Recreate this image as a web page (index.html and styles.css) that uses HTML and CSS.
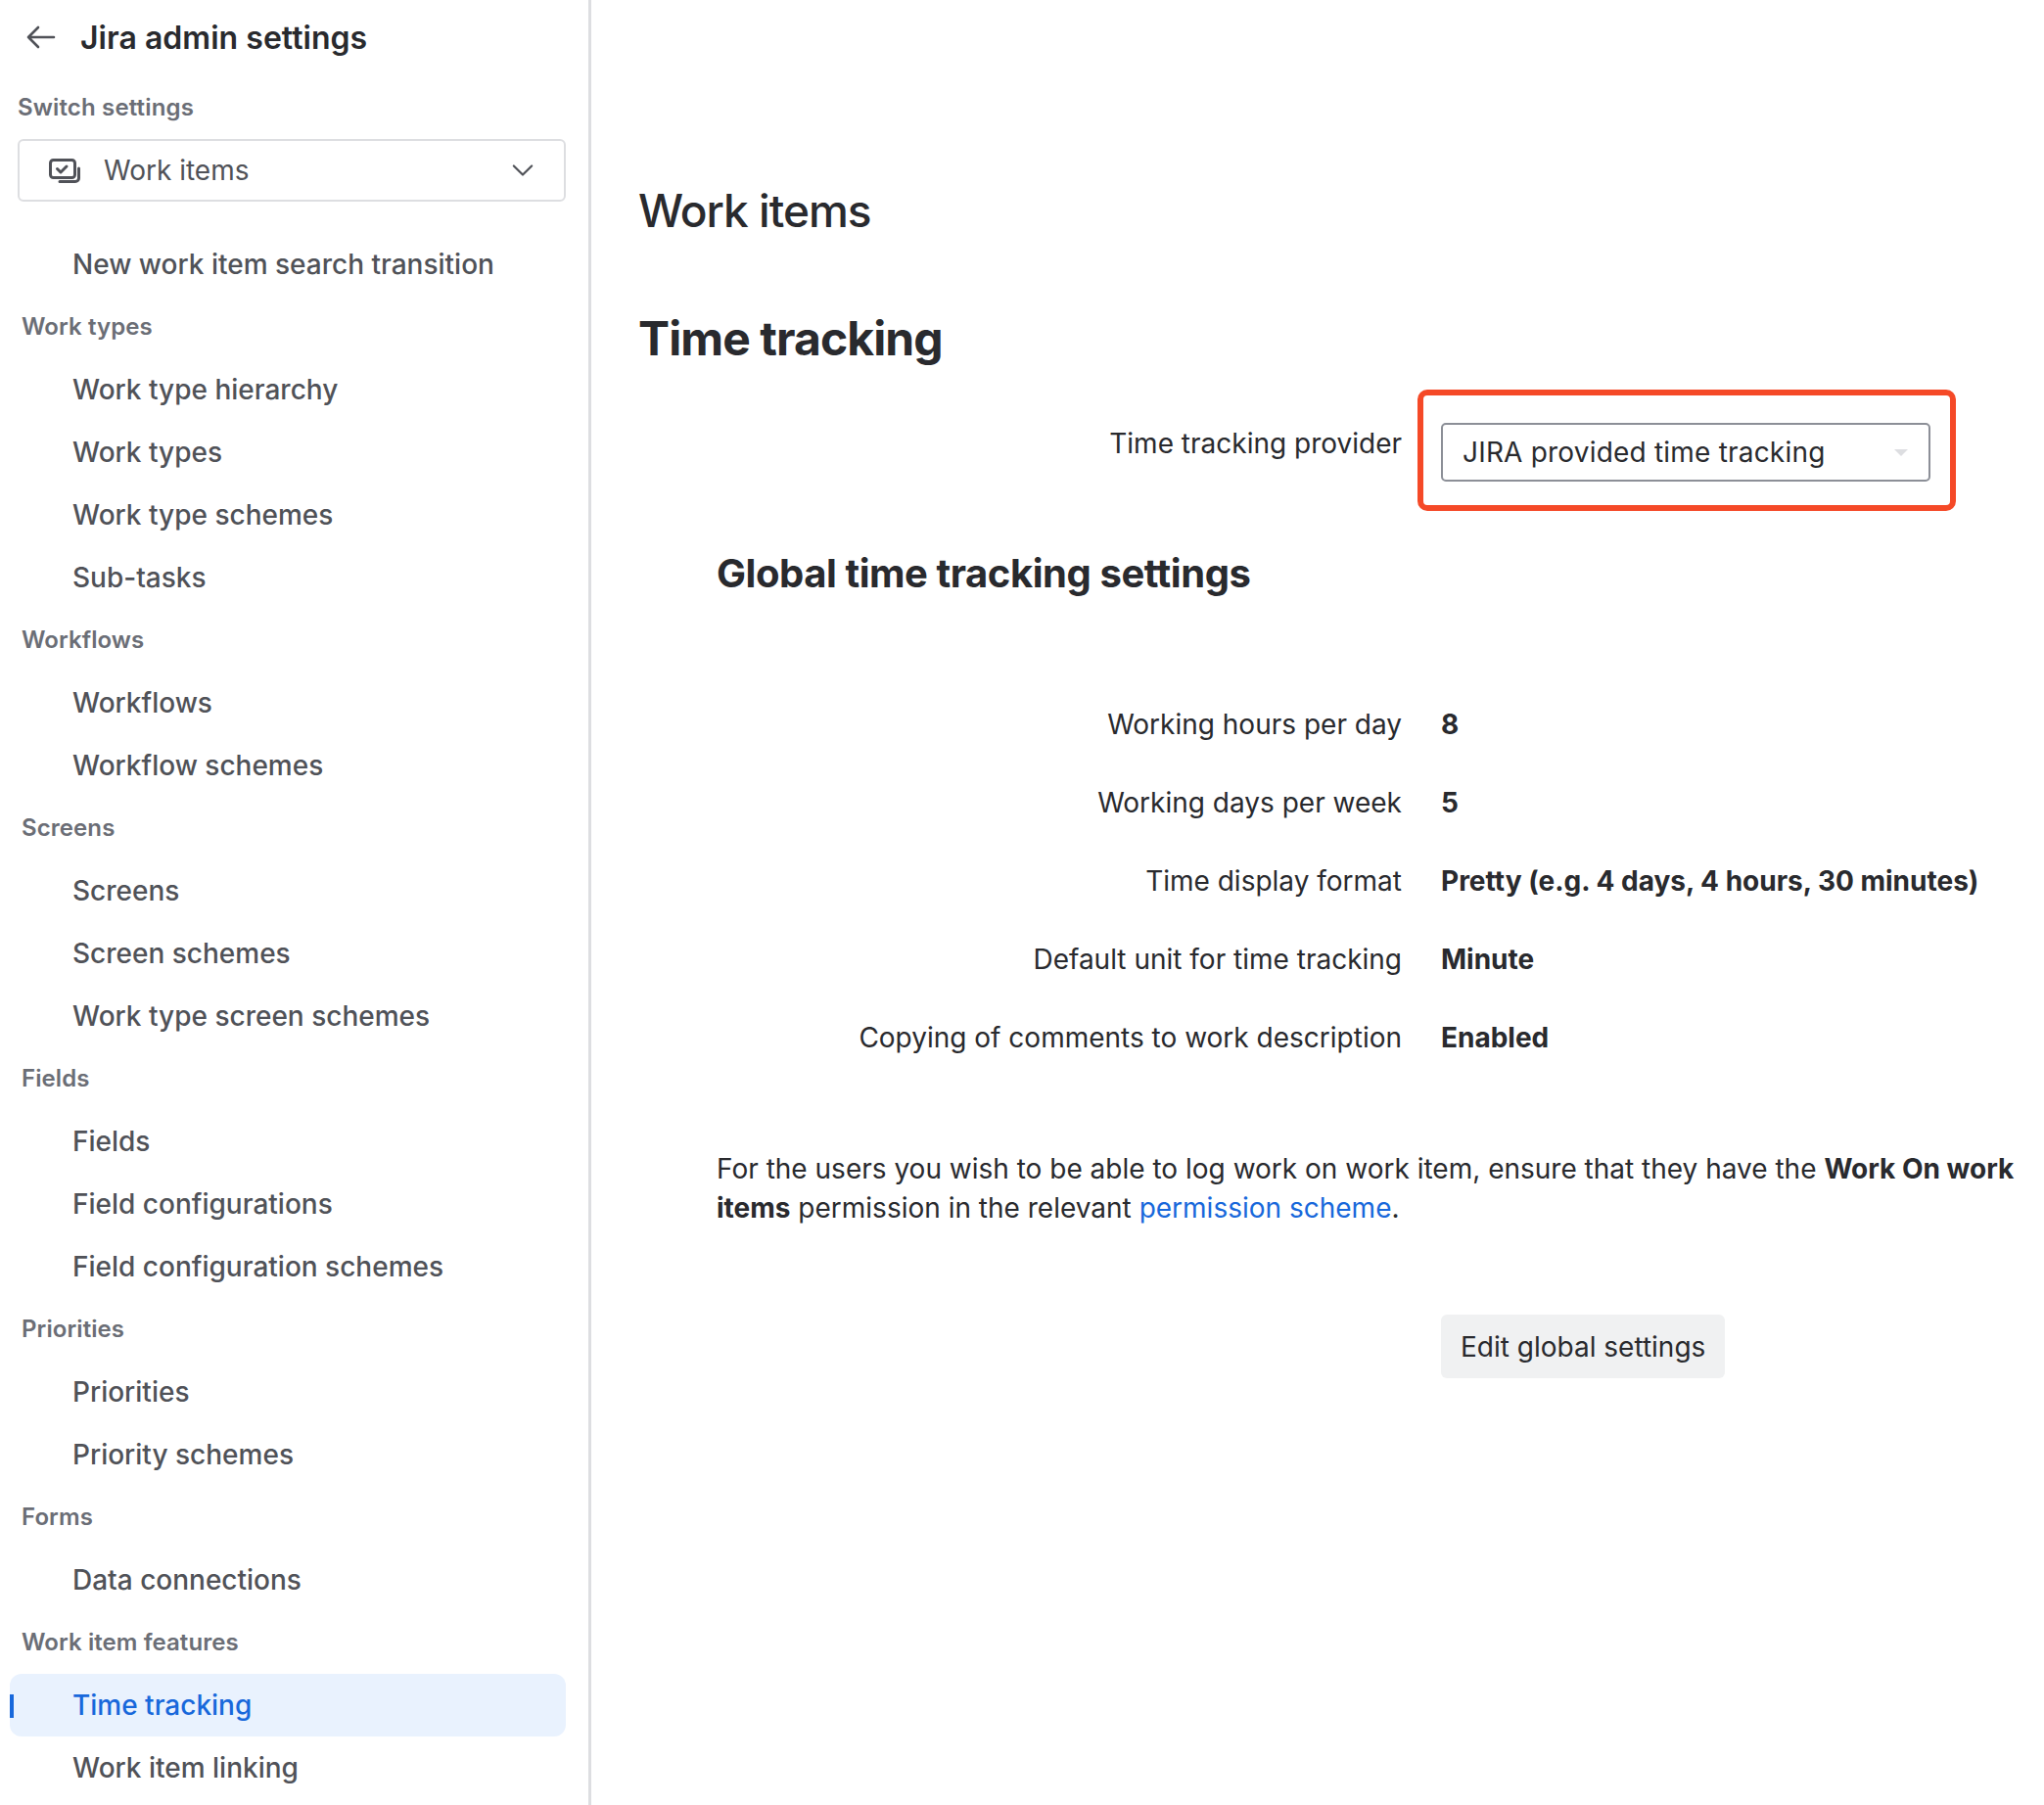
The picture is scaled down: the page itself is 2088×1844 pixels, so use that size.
FILE: index.html
```html
<!DOCTYPE html>
<html lang="en">
<head>
<meta charset="utf-8">
<title>Time tracking</title>
<link rel="stylesheet" href="styles.css">
</head>
<body>
<div class="page">
  <aside class="sidebar">
    <div class="back">
      <svg class="back-icon" viewBox="0 0 32 32" fill="none" stroke="#505258" stroke-width="2.6" stroke-linecap="round" stroke-linejoin="round"><path d="M3 16h26M13 6 3 16l10 10"/></svg>
      <span class="back-title">Jira admin settings</span>
    </div>
    <div class="switch-label">Switch settings</div>
    <div class="switch">
      <svg class="switch-icon" viewBox="0 0 32 25" fill="none" stroke="#505258" stroke-width="3" stroke-linecap="round" stroke-linejoin="round"><rect x="1.5" y="1.5" width="25" height="18" rx="3"/><path d="m8.5 10.5 3.5 3.5 6-6"/><path d="M30.5 10v10a3.5 3.5 0 0 1-3.5 3.5H11"/></svg>
      <span class="switch-text">Work items</span>
      <svg class="chevron" viewBox="0 0 24 24" fill="none" stroke="#505258" stroke-width="2.4" stroke-linecap="round" stroke-linejoin="round"><path d="m2 7 10 10L22 7"/></svg>
    </div>
    <nav class="nav">
      <a class="item">New work item search transition</a>
      <div class="group">Work types</div>
      <a class="item">Work type hierarchy</a>
      <a class="item">Work types</a>
      <a class="item">Work type schemes</a>
      <a class="item">Sub-tasks</a>
      <div class="group">Workflows</div>
      <a class="item">Workflows</a>
      <a class="item">Workflow schemes</a>
      <div class="group">Screens</div>
      <a class="item">Screens</a>
      <a class="item">Screen schemes</a>
      <a class="item">Work type screen schemes</a>
      <div class="group">Fields</div>
      <a class="item">Fields</a>
      <a class="item">Field configurations</a>
      <a class="item">Field configuration schemes</a>
      <div class="group">Priorities</div>
      <a class="item">Priorities</a>
      <a class="item">Priority schemes</a>
      <div class="group">Forms</div>
      <a class="item">Data connections</a>
      <div class="group">Work item features</div>
      <a class="item active">Time tracking</a>
      <a class="item">Work item linking</a>
    </nav>
  </aside>
  <main class="main">
    <h1 class="page-title">Work items</h1>
    <h2 class="section-title">Time tracking</h2>
    <div class="provider">
      <div class="label provider-label">Time tracking provider</div>
      <div class="highlight">
        <div class="select">
          <span class="select-text">JIRA provided time tracking</span>
          <span class="caret"></span>
        </div>
      </div>
    </div>
    <section class="global">
      <h3 class="global-title">Global time tracking settings</h3>
      <dl class="settings">
        <div class="row"><dt class="label">Working hours per day</dt><dd class="value">8</dd></div>
        <div class="row"><dt class="label">Working days per week</dt><dd class="value">5</dd></div>
        <div class="row"><dt class="label">Time display format</dt><dd class="value">Pretty (e.g. 4 days, 4 hours, 30 minutes)</dd></div>
        <div class="row"><dt class="label">Default unit for time tracking</dt><dd class="value">Minute</dd></div>
        <div class="row"><dt class="label">Copying of comments to work description</dt><dd class="value">Enabled</dd></div>
      </dl>
      <p class="note">For the users you wish to be able to log work on work item, ensure that they have the <b>Work On work items</b> permission in the relevant <a class="link">permission scheme</a>.</p>
      <div class="actions"><button class="btn">Edit global settings</button></div>
    </section>
  </main>
</div>
</body>
</html>
```
FILE: styles.css
```css
* { box-sizing: border-box; }
html, body { margin: 0; padding: 0; background: #fff; }
body { font-family: Inter, "Liberation Sans", sans-serif; color: #292A2E; font-size: 28px; }
.page { display: flex; width: 2088px; height: 1844px; overflow: hidden; }

.sidebar { width: 604px; flex: none; height: 1844px; border-right: 3px solid #DDDEE1; padding: 0 23px 0 10px; }
.back { display: flex; align-items: center; height: 76px; padding-left: 16px; gap: 24px; }
.back-icon { width: 32px; height: 32px; flex: none; }
.back-title { font-size: 32px; font-weight: 600; letter-spacing: 0.03px; }
.switch-label { font-size: 24px; font-weight: 600; letter-spacing: 0.15px; color: #6B6E76; height: 34px; line-height: 34px; margin: 17px 0 15px 8px; }
.switch { display: flex; align-items: center; height: 64px; margin-left: 8px; border: 2px solid #DDDEE1; border-radius: 6px; padding: 0 31px 0 30px; color: #505258; }
.switch-icon { width: 32px; height: 25px; flex: none; }
.switch-text { margin-left: 24px; flex: 1; }
.chevron { width: 22px; height: 22px; flex: none; }

.nav { margin-top: 32px; display: flex; flex-direction: column; }
.item { display: flex; align-items: center; height: 64px; padding-left: 64px; color: #505258; font-weight: 500; font-size: 28px; border-radius: 12px; position: relative; }
.group { display: flex; align-items: center; height: 64px; padding: 0 0 2px 12px; color: #6B6E76; font-size: 24px; font-weight: 600; letter-spacing: 0.08px; }
.item.active { color: #1868DB; background: #E9F2FE; }
.item.active::before { content: ""; position: absolute; left: 0; top: 21px; width: 4px; height: 24px; background: #1868DB; }

.main { flex: 1; min-width: 0; padding: 0 0 0 48px; }
.page-title { margin: 183px 0 0; font-size: 46px; line-height: 64px; font-weight: 500; letter-spacing: -1px; }
.section-title { margin: 67px 0 0; font-size: 48px; line-height: 64px; font-weight: 700; letter-spacing: -0.9px; }
.label { color: #292A2E; text-align: right; width: 780px; flex: none; margin: 0; }
.provider { display: flex; align-items: flex-start; margin-top: 20px; }
.provider-label { line-height: 40px; padding-top: 35px; }
.highlight { margin-left: 16px; width: 550px; height: 124px; border: 6px solid #F54927; border-radius: 10px; padding: 28px 20px 0 18px; }
.select { display: flex; align-items: center; justify-content: space-between; height: 60px; border: 2px solid #8C8F97; border-radius: 5px; padding: 0 21px 0 20px; }
.select-text { letter-spacing: 0.2px; }
.caret { width: 0; height: 0; border-left: 7px solid transparent; border-right: 7px solid transparent; border-top: 7px solid #DDDEE1; }

.global { padding-left: 80px; }
.global-title { margin: 38px 0 0; font-size: 40px; line-height: 52px; font-weight: 700; letter-spacing: -0.44px; }
.settings { margin: 88px 0 0 -80px; }
.row { display: flex; align-items: center; height: 80px; }
.value { margin: 0 0 0 40px; font-weight: 700; white-space: nowrap; }
.note { margin: 74px 0 0; width: 1332px; line-height: 40px; }
.note b { font-weight: 700; }
.link { color: #1868DB; }
.actions { margin: 89px 0 0 740px; }
.btn { font: inherit; color: #292A2E; border: 0; background: #F0F1F2; border-radius: 6px; height: 65px; padding: 0 20px; }
```
